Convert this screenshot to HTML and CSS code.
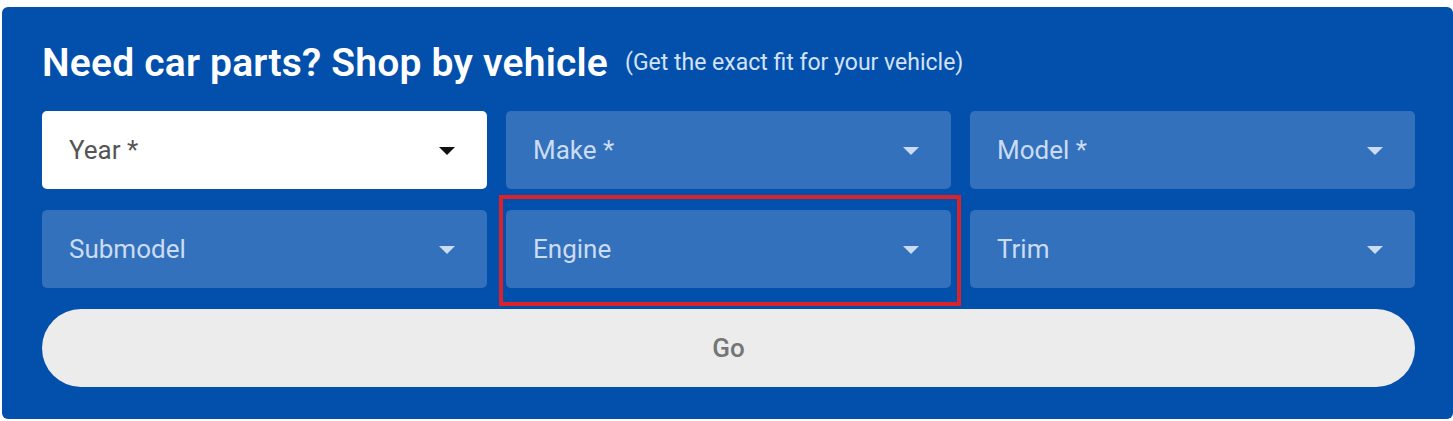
FILE: index.html
```html
<!DOCTYPE html>
<html lang="en">
<head>
<meta charset="utf-8">
<title>Shop by vehicle</title>
<link rel="stylesheet" href="styles.css">
</head>
<body>
<section class="finder">
  <div class="finder-head">
    <h2 class="finder-title">Need car parts? Shop by vehicle</h2>
    <span class="finder-sub">(Get the exact fit for your vehicle)</span>
  </div>
  <div class="finder-grid">
    <div class="select select-active"><span class="select-label">Year *</span><span class="caret"></span></div>
    <div class="select"><span class="select-label">Make *</span><span class="caret"></span></div>
    <div class="select"><span class="select-label">Model *</span><span class="caret"></span></div>
    <div class="select"><span class="select-label">Submodel</span><span class="caret"></span></div>
    <div class="select select-highlight"><span class="select-label">Engine</span><span class="caret"></span></div>
    <div class="select"><span class="select-label">Trim</span><span class="caret"></span></div>
  </div>
  <button class="go-btn" type="button">Go</button>
</section>
</body>
</html>
```

FILE: styles.css
```css
html, body {
  margin: 0;
  padding: 0;
  background: #ffffff;
  font-family: Roboto, "Liberation Sans", Arial, sans-serif;
}

body {
  padding: 7px 0 0 2px;
}

.finder {
  box-sizing: border-box;
  width: 1451px;
  height: 412px;
  background: #0350ac;
  border-radius: 6px;
  padding: 33px 38px 0 40px;
}

.finder-head {
  display: flex;
  align-items: center;
  gap: 17px;
  height: 71px;
  align-content: flex-start;
}

.finder-title {
  margin: 0 0 25px;
  color: #ffffff;
  font-size: 39px;
  font-weight: 600;
  line-height: 46px;
  letter-spacing: 0.2px;
}

.finder-sub {
  color: #d3e2f6;
  font-size: 23px;
  font-weight: 400;
  margin-bottom: 27px;
}

.finder-grid {
  display: grid;
  grid-template-columns: repeat(3, 445px);
  column-gap: 19px;
  row-gap: 21px;
}

.select {
  position: relative;
  box-sizing: border-box;
  height: 78px;
  border-radius: 5px;
  background: #3371bc;
  display: flex;
  align-items: center;
  justify-content: space-between;
  padding: 0 32px 0 27px;
}

.select-label {
  color: #cbdcf2;
  font-size: 26px;
  font-weight: 400;
}

.caret {
  width: 0;
  height: 0;
  border-left: 8px solid transparent;
  border-right: 8px solid transparent;
  border-top: 8px solid #cbdcf2;
  margin-top: 2px;
}

.select-active {
  background: #ffffff;
}

.select-active .select-label {
  color: #555555;
}

.select-active .caret {
  border-top-color: #111111;
}

.select-highlight::after {
  content: "";
  position: absolute;
  left: -7px;
  top: -15px;
  right: -10px;
  bottom: -18px;
  border: 4px solid #da2229;
  pointer-events: none;
}

.go-btn {
  display: block;
  box-sizing: border-box;
  width: 1373px;
  height: 78px;
  margin-top: 21px;
  border: none;
  border-radius: 39px;
  background: #ececec;
  color: #757575;
  font-family: Roboto, "Liberation Sans", Arial, sans-serif;
  font-size: 26px;
  font-weight: 500;
  cursor: pointer;
}
```
